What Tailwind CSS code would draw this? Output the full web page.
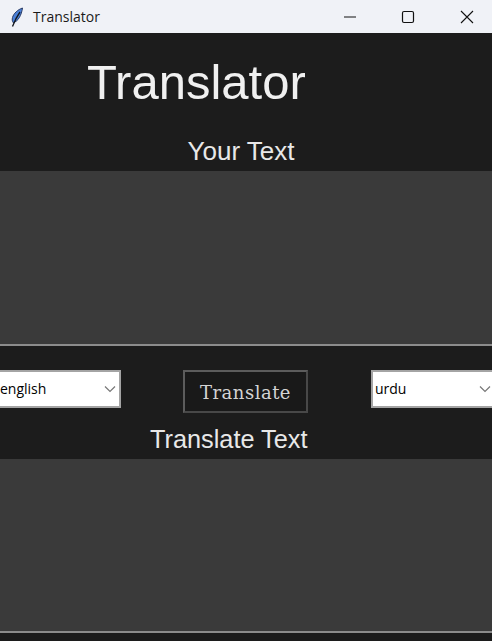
<!DOCTYPE html>
<html lang="en">
<head>
    <meta charset="UTF-8">
    <title>Translator</title>
    <script src="https://cdn.jsdelivr.net/npm/@tailwindcss/browser@4"></script>
</head>
<body class="w-[492px] h-[641px] overflow-hidden bg-[#1c1c1c] font-['Liberation_Sans',sans-serif]">
    <!-- title bar -->
    <div class="h-[33px] bg-[#f0f2f7] flex items-center">
        <svg class="ml-[9px] w-[16px] h-[24px]" viewBox="0 0 16 24">
            <path d="M13.500 3C9 4.500 4.500 8.500 3.500 12.500c-.5 2 -.3 3.500 .5 5C9 17 12.500 10 13.500 3z" fill="#4a80d8" stroke="#2a3c66" stroke-width="1"/>
            <path d="M11 7C8.500 10.500 6 15 3.500 21.500" fill="none" stroke="#14181f" stroke-width="1.300"/>
        </svg>
        <span class="ml-[8px] text-[14px] text-[#1a1a1a] font-['Open_Sans',sans-serif]">Translator</span>
        <div class="ml-auto flex items-center">
            <svg class="w-[14px] h-[14px] mr-[44px]" viewBox="0 0 14 14"><path d="M1 7h12" stroke="#111" stroke-width="1"/></svg>
            <svg class="w-[14px] h-[14px] mr-[45px]" viewBox="0 0 14 14"><rect x="1.500" y="1.500" width="11" height="11" rx="1.500" fill="none" stroke="#111" stroke-width="1.200"/></svg>
            <svg class="w-[14px] h-[14px] mr-[18px]" viewBox="0 0 14 14"><path d="M1 1l12 12M13 1L1 13" stroke="#111" stroke-width="1.100"/></svg>
        </div>
    </div>

    <div class="h-[73px] pl-[87px] pt-[25px]">
        <h1 class="text-[49px] leading-[48px] text-[#f0f0f0]">Translator</h1>
    </div>
    <div class="h-[65px] flex justify-center items-end pb-[7px]">
        <p class="ml-[-10px] text-[26px] leading-none text-[#e8e8e8]">Your Text</p>
    </div>

    <div class="h-[175px] bg-[#3a3a3a] border-b-2 border-[#8c8c8c]"></div>

    <div class="h-[113px] relative">
        <div class="flex items-start pt-[24px]">
            <div class="w-[121px] h-[38px] bg-white border-2 border-l-0 border-[#a4a4a4] flex items-center justify-between pr-[3px] pb-[1px] text-[14px] text-black font-['Open_Sans',sans-serif]">
                <span>english</span>
                <svg class="w-[12px] h-[8px]" viewBox="0 0 12 8"><path d="M1 1.500l5 5 5-5" fill="none" stroke="#777" stroke-width="1.200"/></svg>
            </div>
            <button class="ml-[62px] w-[125px] h-[43px] pt-[2px] bg-[#191919] border-2 border-t-[#5c5c5c] border-l-[#5c5c5c] border-r-[#484848] border-b-[#484848] text-[18px] tracking-[0.5px] font-medium text-[#d4d4d4] font-['DejaVu_Serif',serif]">Translate</button>
            <div class="ml-[63px] w-[121px] h-[38px] bg-white border-2 border-r-0 border-[#a4a4a4] flex items-center justify-between pl-[2px] pb-[1px] text-[14px] text-black font-['Open_Sans',sans-serif]">
                <span>urdu</span>
                <svg class="w-[12px] h-[8px] mr-[1px]" viewBox="0 0 12 8"><path d="M1 1.500l5 5 5-5" fill="none" stroke="#777" stroke-width="1.200"/></svg>
            </div>
        </div>
        <p class="absolute left-[150px] top-[81px] text-[25.300px] leading-none text-[#e8e8e8]">Translate Text</p>
    </div>

    <div class="h-[174px] bg-[#3a3a3a] border-b-2 border-[#8c8c8c]"></div>
</body>
</html>
